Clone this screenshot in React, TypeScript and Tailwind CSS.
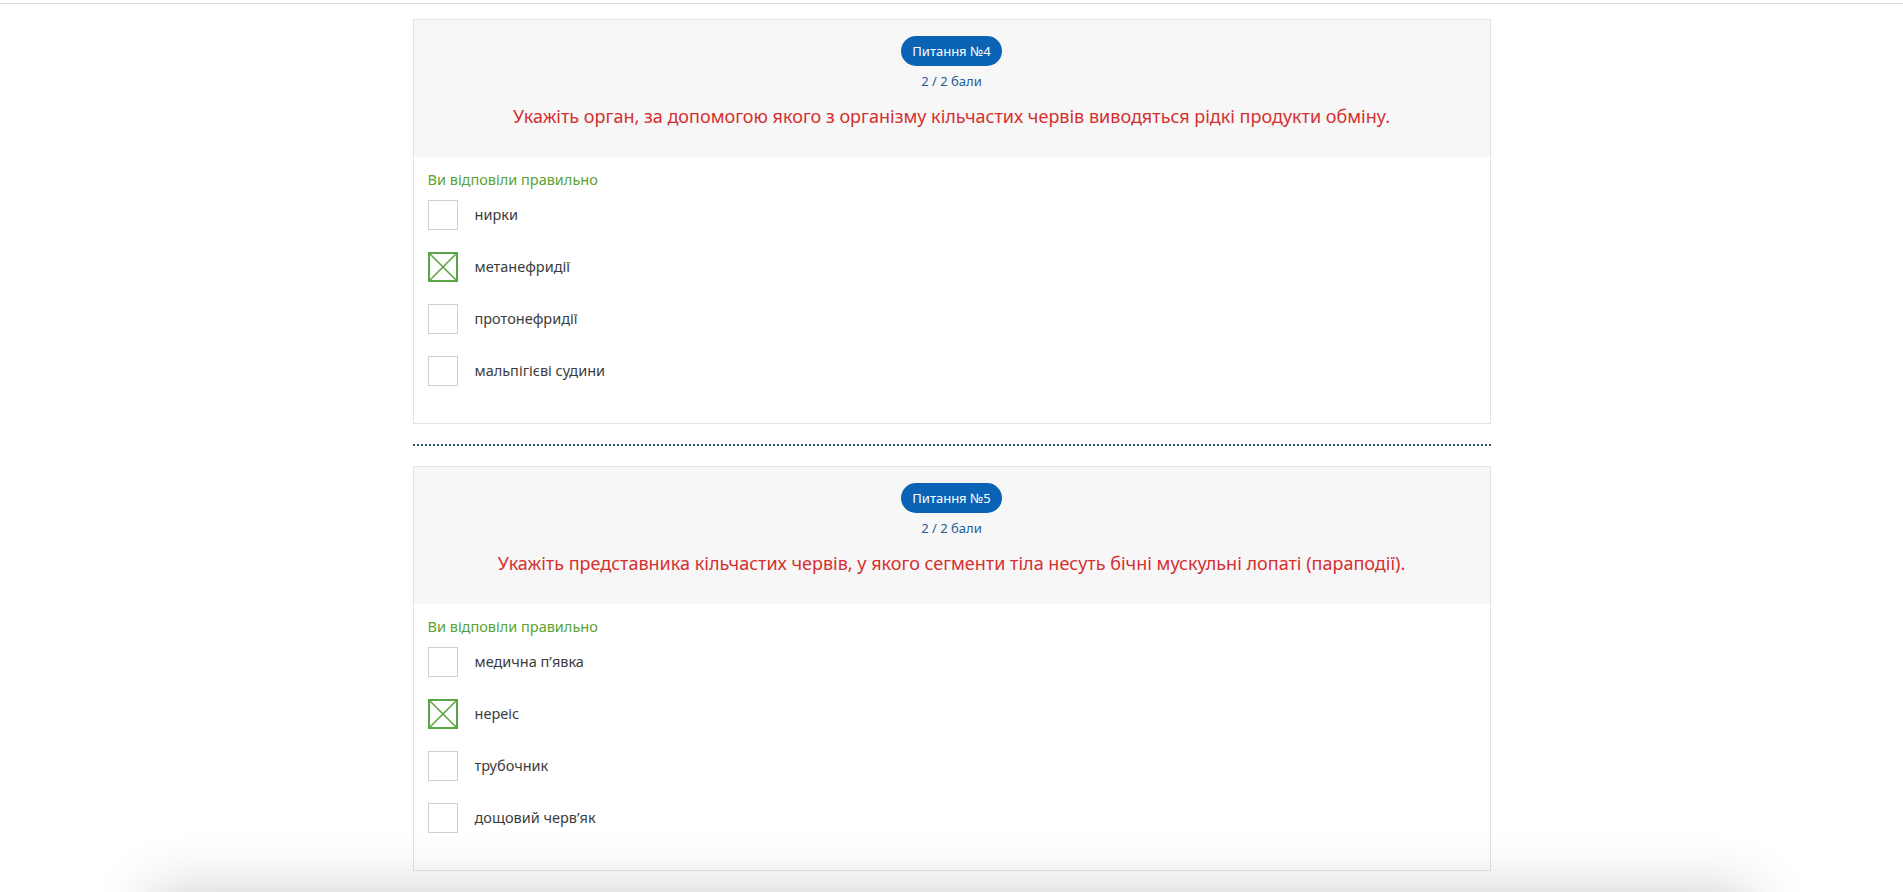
import React from "react";

type Q = { num: number; text: string; options: string[]; correct: number };

const questions: Q[] = [
  {
    num: 4,
    text: "Укажіть орган, за допомогою якого з організму кільчастих червів виводяться рідкі продукти обміну.",
    options: ["нирки", "метанефридії", "протонефридії", "мальпігієві судини"],
    correct: 1,
  },
  {
    num: 5,
    text: "Укажіть представника кільчастих червів, у якого сегменти тіла несуть бічні мускульні лопаті (параподії).",
    options: ["медична п’явка", "нереіс", "трубочник", "дощовий черв’як"],
    correct: 1,
  },
];

function Box({ checked }: { checked: boolean }) {
  if (checked) {
    return (
      <svg width="30" height="30" viewBox="0 0 30 30" className="shrink-0">
        <rect x="1" y="1" width="28" height="28" fill="white" stroke="#5aa545" strokeWidth="2" />
        <path d="M2 2 L28 28 M28 2 L2 28" stroke="#5aa545" strokeWidth="1.6" />
      </svg>
    );
  }
  return <div className="w-[30px] h-[30px] shrink-0 border border-[#cfcfcf] bg-white" />;
}

function Card({ q }: { q: Q }) {
  return (
    <div className="border border-[#e3e3e3] bg-white">
      <div className="bg-[#f7f7f7] flex flex-col items-center pt-[16px] pb-[28px]">
        <div className="h-[30px] px-[11px] rounded-full bg-[#0b63b5] text-white text-[13px] leading-[30px]">
          Питання №{q.num}
        </div>
        <div className="text-[#1e5f98] text-[13px] leading-[20px] mt-[5px]">2 / 2 бали</div>
        <div className="text-[#d52f2f] text-[18px] leading-[26px] mt-[12px]">{q.text}</div>
      </div>
      <div className="px-[14px] pt-[12px] pb-[37px]">
        <div className="text-[#5aa233] text-[14.5px] leading-[20px]">Ви відповіли правильно</div>
        <div className="mt-[11px] flex flex-col gap-[22px]">
          {q.options.map((o, i) => (
            <div key={i} className="flex items-center gap-[17px] h-[30px]">
              <Box checked={i === q.correct} />
              <span className="text-[#3c3c3c] text-[14.5px]">{o}</span>
            </div>
          ))}
        </div>
      </div>
    </div>
  );
}

export default function App() {
  return (
    <div className="min-h-[892px] bg-white" style={{ fontFamily: '"Noto Sans", sans-serif' }}>
      <div className="h-[4px] border-b border-[#dcdcdc]" />
      <div className="w-[1078px] mx-auto pt-[15px]">
        <Card q={questions[0]} />
        <div className="my-[20px] border-t-2 border-dotted border-[#2a5868]" />
        <Card q={questions[1]} />
      </div>
      <div className="fixed left-[150px] w-[1603px] top-full h-[100px] bg-white shadow-[0_0_60px_rgba(0,0,0,0.2)]" />
    </div>
  );
}
